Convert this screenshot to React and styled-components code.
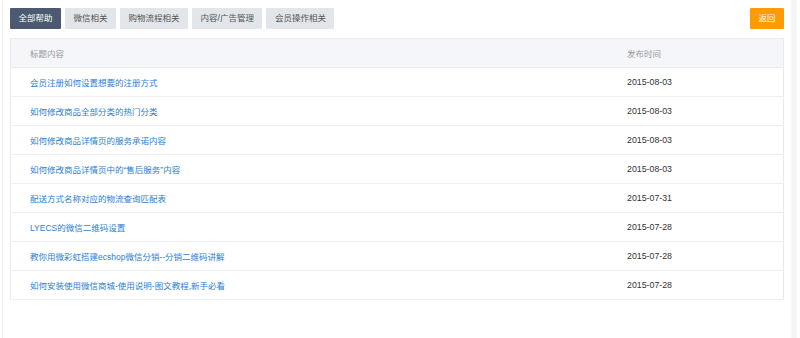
import React from "react";
import styled, { createGlobalStyle } from "styled-components";

const Global = createGlobalStyle`
  html, body { margin: 0; padding: 0; background: #fff; }
  body { font-family: "Liberation Sans", "Noto Sans CJK SC", sans-serif; font-size: 8.5px; color: #333; }
`;

const Page = styled.div`
  display: flex;
  height: 338px;
  padding-left: 2px;
  padding-right: 3px;
  box-sizing: border-box;
`;

const Main = styled.div`
  flex: 1;
  border-left: 1px solid #f0f0f2;
  padding: 8px 7px 0 7px;
  display: flex;
  flex-direction: column;
  gap: 9px;
`;

const Strip = styled.div`
  width: 6px;
  background: #f5f5f7;
`;

const Toolbar = styled.div`
  display: flex;
  align-items: center;
  justify-content: space-between;
`;

const Tabs = styled.div`
  display: flex;
  gap: 4px;
`;

const Tab = styled.button`
  height: 21px;
  padding: 0 8.5px;
  border: none;
  border-radius: 1px;
  font-family: inherit;
  font-size: 8.5px;
  line-height: 21px;
  cursor: pointer;
  background: ${(p) => (p.$active ? "#4c5a71" : "#e2e5e9")};
  color: ${(p) => (p.$active ? "#fff" : "#555")};
`;

const BackButton = styled.button`
  height: 21px;
  width: 34px;
  padding: 0;
  border: none;
  border-radius: 1px;
  background: #ff9a00;
  color: #fff;
  font-family: inherit;
  font-size: 8.5px;
  line-height: 21px;
`;

const Table = styled.table`
  width: 774px;
  table-layout: fixed;
  border-collapse: collapse;
  border: 1px solid #e9eaee;
`;

const HeadCell = styled.th`
  height: 28px;
  padding: 0 0 0 19px;
  text-align: left;
  font-weight: normal;
  color: #999;
  background: #f5f6f9;
  border-bottom: 1px solid #e9eaee;
  width: ${(p) => p.$w || "auto"};
`;

const Cell = styled.td`
  height: 28px;
  padding: 0 0 0 19px;
  border-bottom: 1px solid #efeff1;
  color: #333;
  font-size: ${(p) => (p.$date ? "8.8px" : "8.5px")};
`;

const Link = styled.a`
  color: #2a7ed5;
  text-decoration: none;
`;

const tabs = ["全部帮助", "微信相关", "购物流程相关", "内容/广告管理", "会员操作相关"];

const rows = [
  ["会员注册如何设置想要的注册方式", "2015-08-03"],
  ["如何修改商品全部分类的热门分类", "2015-08-03"],
  ["如何修改商品详情页的服务承诺内容", "2015-08-03"],
  ["如何修改商品详情页中的“售后服务”内容", "2015-08-03"],
  ["配送方式名称对应的物流查询匹配表", "2015-07-31"],
  ["LYECS的微信二维码设置", "2015-07-28"],
  ["教你用微彩虹搭建ecshop微信分销--分销二维码讲解", "2015-07-28"],
  ["如何安装使用微信商城-使用说明-图文教程,新手必看", "2015-07-28"],
];

export default function App() {
  return (
    <>
      <Global />
      <Page>
        <Main>
          <Toolbar>
            <Tabs>
              {tabs.map((t, i) => (
                <Tab key={t} $active={i === 0}>{t}</Tab>
              ))}
            </Tabs>
            <BackButton>返回</BackButton>
          </Toolbar>
          <Table>
            <thead>
              <tr>
                <HeadCell $w="578px">标题内容</HeadCell>
                <HeadCell>发布时间</HeadCell>
              </tr>
            </thead>
            <tbody>
              {rows.map(([title, date]) => (
                <tr key={title}>
                  <Cell><Link href="#">{title}</Link></Cell>
                  <Cell $date>{date}</Cell>
                </tr>
              ))}
            </tbody>
          </Table>
        </Main>
        <Strip />
      </Page>
    </>
  );
}
